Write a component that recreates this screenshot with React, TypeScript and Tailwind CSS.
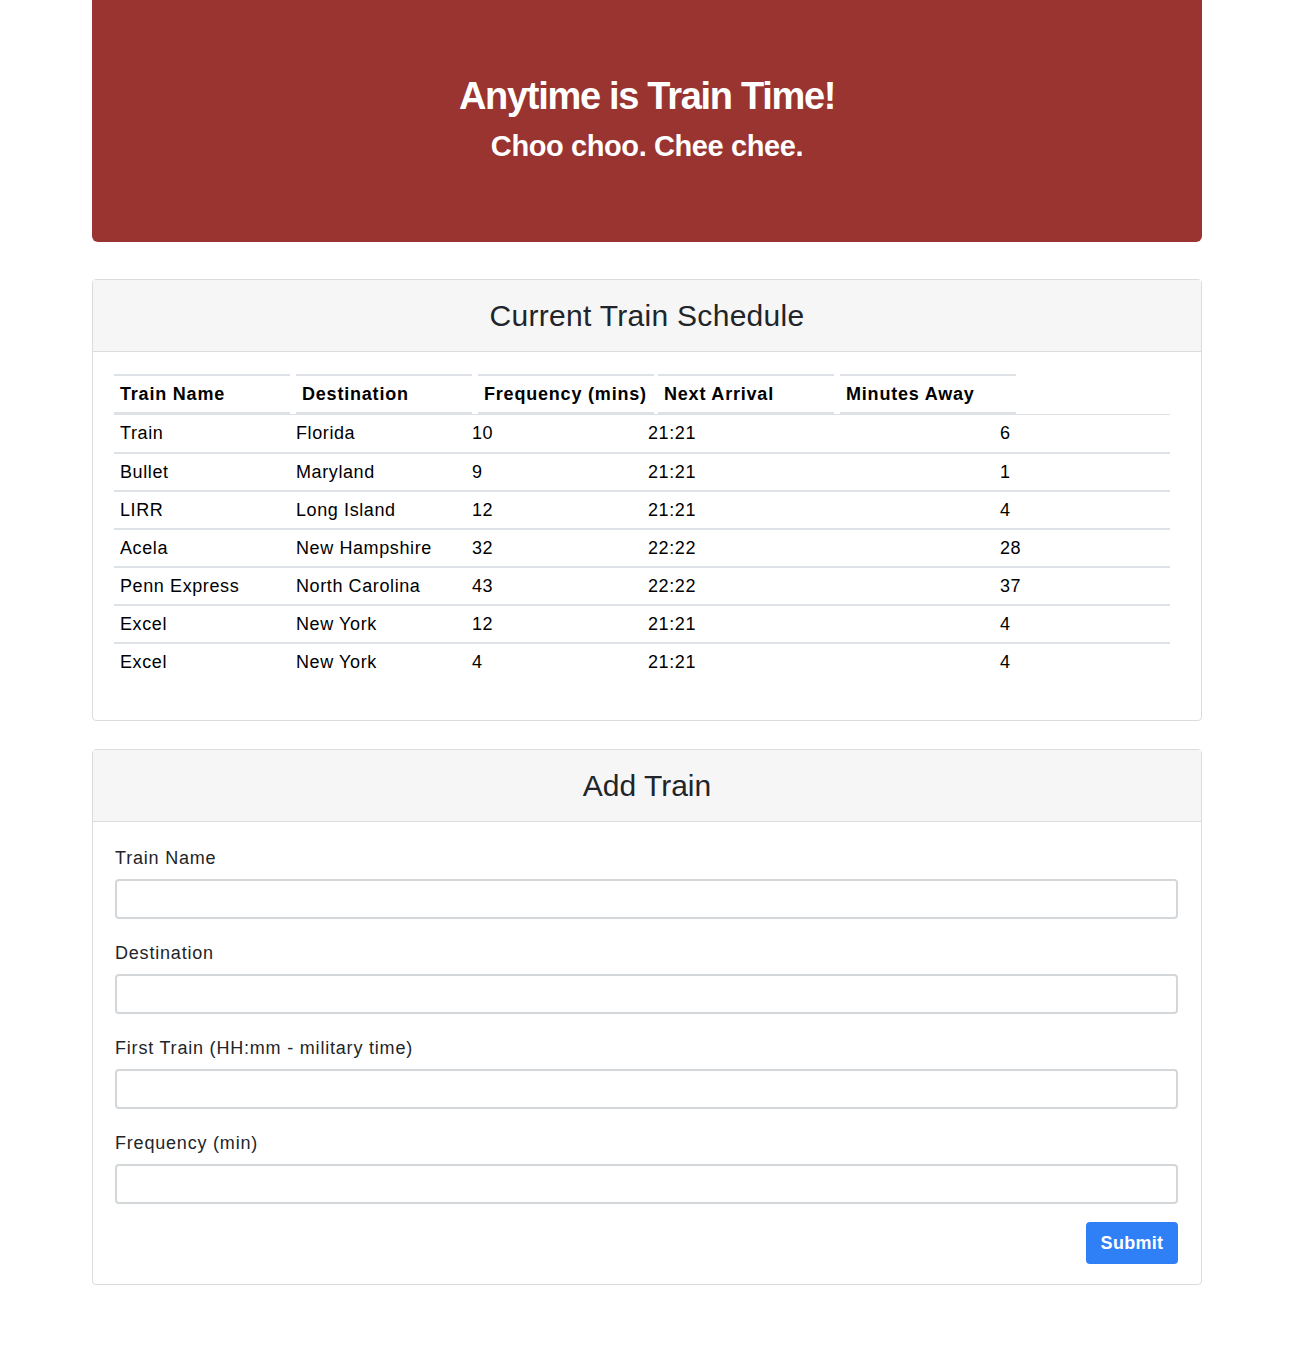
import React from "react";

const rows = [
  ["Train", "Florida", "10", "21:21", "", "6"],
  ["Bullet", "Maryland", "9", "21:21", "", "1"],
  ["LIRR", "Long Island", "12", "21:21", "", "4"],
  ["Acela", "New Hampshire", "32", "22:22", "", "28"],
  ["Penn Express", "North Carolina", "43", "22:22", "", "37"],
  ["Excel", "New York", "12", "21:21", "", "4"],
  ["Excel", "New York", "4", "21:21", "", "4"],
];

const fields = [
  "Train Name",
  "Destination",
  "First Train (HH:mm - military time)",
  "Frequency (min)",
];

export default function App() {
  return (
    <div
      className="min-h-[1348px] bg-white"
      style={{ fontFamily: '"Liberation Sans", Arial, sans-serif' }}
    >
      <div className="ml-[92px] w-[1110px]">
        {/* Jumbotron */}
        <div className="flex h-[242px] flex-col items-center rounded-b-[6px] bg-[#993430] pt-[72px] text-white">
          <h1 className="text-[38px] font-bold leading-[48px] tracking-[-1.3px]">
            Anytime is Train Time!
          </h1>
          <h2 className="mt-[8px] text-[29px] font-bold leading-[36px] tracking-[-0.4px]">
            Choo choo. Chee chee.
          </h2>
        </div>

        {/* Schedule card */}
        <div className="mt-[37px] rounded-[4px] border border-[#dcdcdc]">
          <div className="flex h-[72px] items-center justify-center border-b border-[#dcdcdc] bg-[#f6f6f6]">
            <span className="text-[30px] tracking-[0.3px] text-[#212529]">
              Current Train Schedule
            </span>
          </div>
          <div className="px-[21px] pb-[40px] pt-[22px]">
            <div className="w-[1056px] text-[18px] tracking-[0.6px] text-black">
              <div className="flex">
                {[
                  ["Train Name", "ml-0"],
                  ["Destination", "ml-[6px]"],
                  ["Frequency (mins)", "ml-[6px]"],
                  ["Next Arrival", "ml-[4px]"],
                  ["Minutes Away", "ml-[6px]"],
                ].map(([h, m]) => (
                  <div
                    key={h}
                    className={`${m} flex h-[40px] w-[176px] items-center whitespace-nowrap border-y-2 border-[#dee2e6] pl-[6px] font-bold tracking-[0.8px]`}
                  >
                    {h}
                  </div>
                ))}
              </div>
              {rows.map((r, i) => (
                <div
                  key={i}
                  className={`flex h-[38px] items-center ${
                    i === 0 ? "border-t" : "border-t-2"
                  } border-[#dee2e6]`}
                >
                  {r.map((c, j) => (
                    <div key={j} className="w-[176px] whitespace-nowrap pl-[6px]">
                      {c}
                    </div>
                  ))}
                </div>
              ))}
            </div>
          </div>
        </div>

        {/* Add train card */}
        <div className="mt-[28px] rounded-[4px] border border-[#dcdcdc]">
          <div className="flex h-[72px] items-center justify-center border-b border-[#dcdcdc] bg-[#f6f6f6]">
            <span className="text-[30px] text-[#212529]">Add Train</span>
          </div>
          <div className="pl-[22px] pr-[23px] pb-[20px] pt-[24px]">
            {fields.map((f) => (
              <div key={f} className="mb-[22px]">
                <label className="block text-[18px] leading-[24px] tracking-[0.8px] text-[#212529]">
                  {f}
                </label>
                <input
                  type="text"
                  className="mt-[9px] block h-[40px] w-full rounded-[4px] border-2 border-[#d4d7da] bg-white px-3"
                />
              </div>
            ))}
            <div className="-mt-[4px] flex justify-end">
              <button className="h-[42px] w-[92px] rounded-[4px] bg-[#2f80f6] text-[18px] font-bold tracking-[0.3px] text-white">
                Submit
              </button>
            </div>
          </div>
        </div>
      </div>
    </div>
  );
}
